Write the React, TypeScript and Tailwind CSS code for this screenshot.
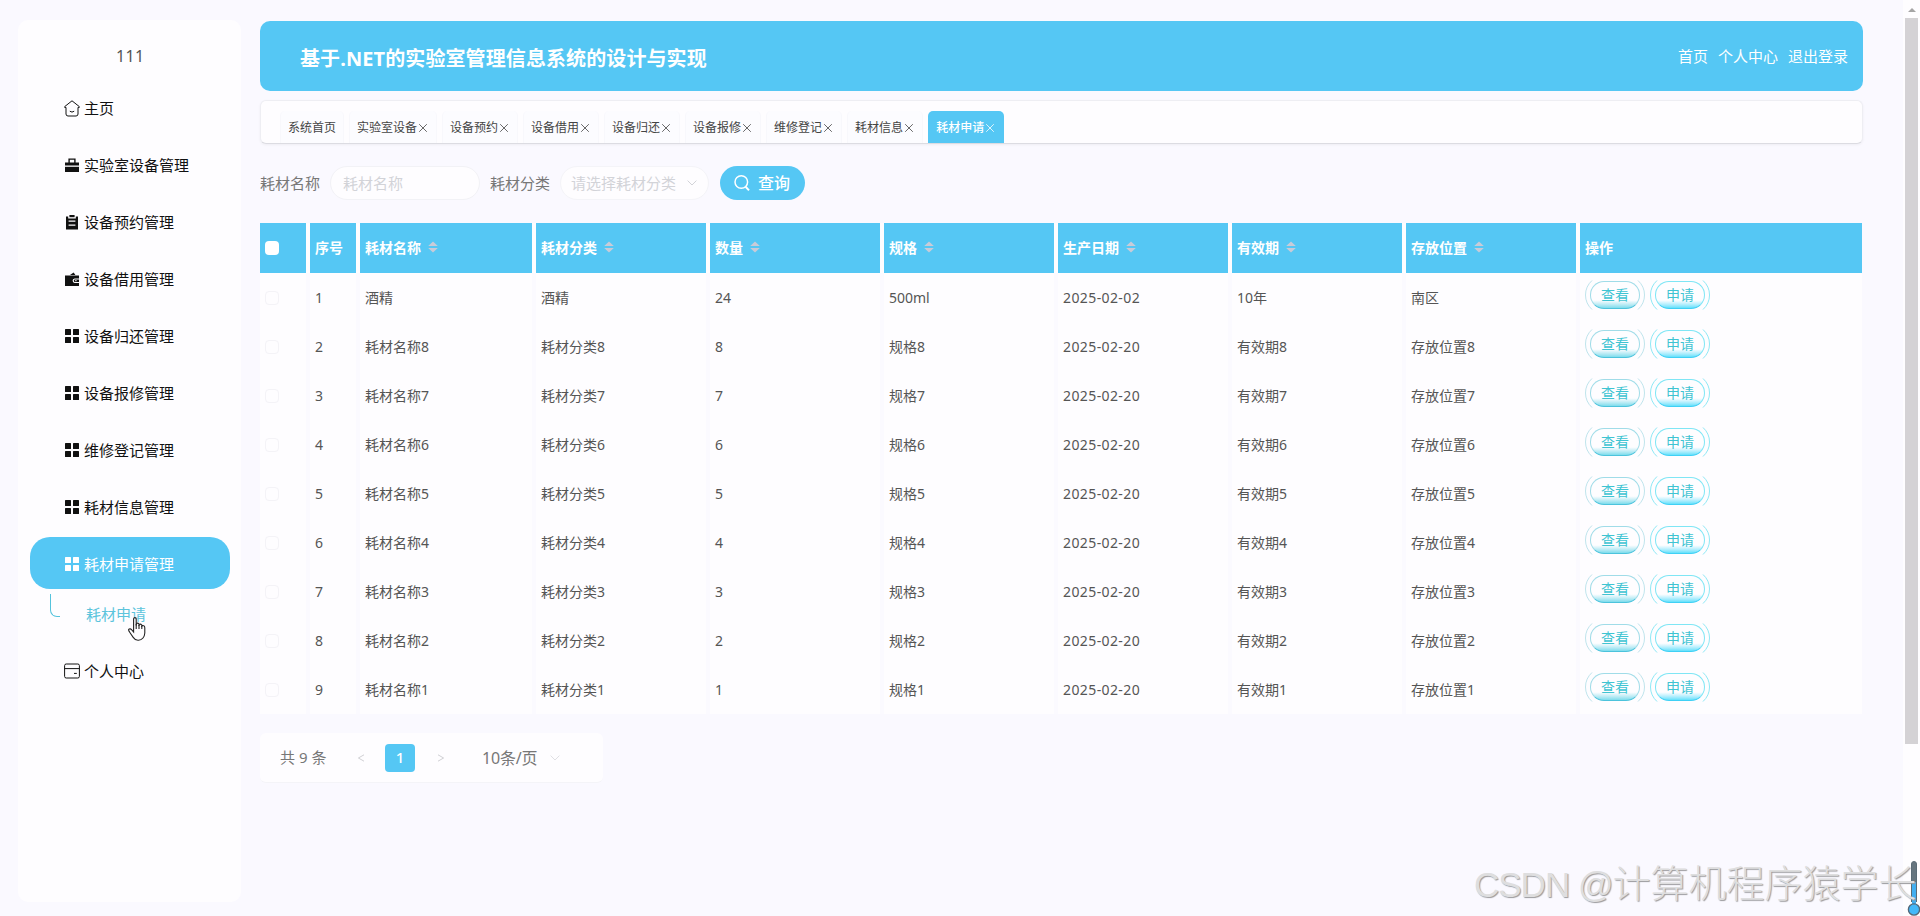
import React, { useState } from 'react';

interface MenuItem {
  label: string;
  icon: React.FC;
}

interface Tab {
  label: string;
  closable: boolean;
}

interface Supply {
  name: string;
  category: string;
  count: string;
  spec: string;
  date: string;
  expiry: string;
  place: string;
}

const HomeIcon: React.FC = () => (
  <svg viewBox="0 0 16 17" className="w-4 h-[17px]" fill="none" stroke="currentColor" strokeWidth="1">
    <path d="M8 .8 L.7 6.6 V7.4 H2 V14 Q2 16 4 16 H12 Q14 16 14 14 V7.4 H15.3 V6.6 Z" />
    <path d="M5.8 11.2 Q8 13 10.2 11.2" />
  </svg>
);

const BriefcaseIcon: React.FC = () => (
  <svg viewBox="0 0 16 16" className="w-4 h-4" fill="currentColor">
    <path d="M1 5.4 H4.4 V1.4 H11.6 V5.4 H15 V8.6 H1 Z M5.8 2.8 V5.4 H10.2 V2.8 Z" fillRule="evenodd" />
    <path d="M1 9.8 H15 V15 H1 Z" />
  </svg>
);

const ClipboardIcon: React.FC = () => (
  <svg viewBox="0 0 16 16" className="w-4 h-4" fill="currentColor">
    <path d="M2 2.6 H4.2 V4.4 H11.8 V2.6 H14 V15.6 H2 Z M4.6 6.6 V7.8 H11.4 V6.6 Z M4.6 10.6 V11.8 H11.4 V10.6 Z" fillRule="evenodd" />
    <path d="M5.4 1 H10.6 V3.2 H5.4 Z" />
  </svg>
);

const WalletIcon: React.FC = () => (
  <svg viewBox="0 0 16 16" className="w-4 h-4" fill="currentColor">
    <path d="M6 4 L9.6 1.6 L11.4 4 Z" />
    <path d="M1 4.6 H15 V7.4 H10.6 Q8.6 7.6 8.6 9.6 Q8.6 11.8 10.6 12 H15 V15 H1 Z" />
    <path d="M11 8.4 H15 V11 H11 Q9.8 11 9.8 9.7 Q9.8 8.4 11 8.4 Z M11.3 9.1 V10.3 H12.5 V9.1 Z" fillRule="evenodd" />
  </svg>
);

const GridIcon: React.FC = () => (
  <svg viewBox="0 0 16 16" className="w-4 h-4" fill="currentColor">
    <rect x="1" y="1" width="6" height="6" rx=".5" />
    <rect x="9" y="1" width="6" height="6" rx=".5" />
    <rect x="1" y="9" width="6" height="6" rx=".5" />
    <rect x="9" y="9" width="6" height="6" rx=".5" />
  </svg>
);

const CardIcon: React.FC = () => (
  <svg viewBox="0 0 16 16" className="w-4 h-4" fill="none" stroke="currentColor" strokeWidth="1">
    <rect x=".6" y="1" width="14.8" height="14" rx="1.6" />
    <path d="M.6 5.6 H15.4 M10 10.4 H12.8" />
  </svg>
);

const SearchIcon: React.FC = () => (
  <svg viewBox="0 0 16 18" className="w-4 h-[18px]" fill="none" stroke="currentColor" strokeWidth="1.5">
    <circle cx="7.3" cy="8" r="6.3" />
    <path d="M11.6 12.8 L15 16.4" strokeWidth="2" />
  </svg>
);

const ChevronDown: React.FC = () => (
  <svg viewBox="0 0 10 6" className="w-2.5 h-1.5" fill="none" stroke="currentColor" strokeWidth="1">
    <path d="M.6 .6 L5 5 L9.4 .6" />
  </svg>
);

const CloseIcon: React.FC = () => (
  <svg viewBox="0 0 12 12" className="w-3 h-3" fill="none" stroke="currentColor" strokeWidth="1" opacity=".8">
    <path d="M2.2 2.2 L9.8 9.8 M9.8 2.2 L2.2 9.8" />
  </svg>
);

const SortIcon: React.FC = () => (
  <svg viewBox="0 0 10 12" className="w-2.5 h-3 ml-[7px] -mt-0.5" fill="#c9cbd8">
    <path d="M5 .4 L9.8 5 H.2 Z M.2 7 H9.8 L5 11.6 Z" />
  </svg>
);

const menu: MenuItem[] = [
  { label: '主页', icon: HomeIcon },
  { label: '实验室设备管理', icon: BriefcaseIcon },
  { label: '设备预约管理', icon: ClipboardIcon },
  { label: '设备借用管理', icon: WalletIcon },
  { label: '设备归还管理', icon: GridIcon },
  { label: '设备报修管理', icon: GridIcon },
  { label: '维修登记管理', icon: GridIcon },
  { label: '耗材信息管理', icon: GridIcon },
  { label: '耗材申请管理', icon: GridIcon },
];

const tabs: Tab[] = [
  { label: '系统首页', closable: false },
  { label: '实验室设备', closable: true },
  { label: '设备预约', closable: true },
  { label: '设备借用', closable: true },
  { label: '设备归还', closable: true },
  { label: '设备报修', closable: true },
  { label: '维修登记', closable: true },
  { label: '耗材信息', closable: true },
  { label: '耗材申请', closable: true },
];

const headers = ['耗材名称', '耗材分类', '数量', '规格', '生产日期', '有效期', '存放位置'];

const supplies: Supply[] = [
  { name: '酒精', category: '酒精', count: '24', spec: '500ml', date: '2025-02-02', expiry: '10年', place: '南区' },
  ...[8, 7, 6, 5, 4, 3, 2, 1].map(n => ({
    name: `耗材名称${n}`,
    category: `耗材分类${n}`,
    count: `${n}`,
    spec: `规格${n}`,
    date: '2025-02-20',
    expiry: `有效期${n}`,
    place: `存放位置${n}`,
  })),
];

const COLUMNS = 'grid grid-cols-[46px_46px_172px_170px_170px_170px_170px_170px_170px_282px] gap-x-1';

const Sidebar: React.FC = () => {
  const [active, setActive] = useState('耗材申请管理');

  return (
    <aside className="w-[223px] h-[882px] mt-5 ml-[18px] shrink-0 rounded-[10px] bg-[#fefdff] text-[15px] text-[#111]">
      <div className="h-[61px] pt-6 pl-[98px] text-base leading-6 text-[#555] tracking-[0.3px]">111</div>
      <nav className="pl-3">
        {menu.map(({ label, icon: Icon }) => (
          <button
            key={label}
            onClick={() => setActive(label)}
            className={`flex items-center gap-1 w-[200px] h-[52px] mb-[5px] pt-0.5 pl-[34px] rounded-[20px] ${
              active === label ? 'bg-[#55c7f4] text-white' : ''
            }`}
          >
            <Icon />
            {label}
          </button>
        ))}
        <div className="flex h-[51px] pl-5 text-[#5cc4dc]">
          <div className="w-2.5 h-[23px] border-l border-b rounded-bl-[7px] border-[#55c3dc]" />
          <span className="relative ml-[26px] mt-[8px] leading-6 h-6">
            耗材申请
            <svg viewBox="0 0 20 26" className="absolute left-[41px] top-[14px] w-5 h-[26px]" fill="#fefdff" stroke="#222" strokeWidth="1.1">
              <path d="M6.6 16 V3.2 Q6.6 1.6 7.9 1.6 Q9.2 1.6 9.2 3.2 V9.6 V7.6 Q10.8 6.6 12 8 V10 V8.4 Q13.6 7.6 14.8 9 V11 V9.6 Q17.8 9 17.8 12 V17 Q17.6 20 16 22 Q14 24.4 11 24.2 Q8 24.2 6.2 21.4 L3.2 17 Q1.2 14.4 1.6 13.4 Q3.2 12 5 14.2 Z" />
              <path d="M9.2 8 V13 M12 9 V13 M14.8 10 V13" />
            </svg>
          </span>
        </div>
        <button className="flex items-center gap-1 w-[200px] h-[52px] pl-[34px]">
          <CardIcon />
          个人中心
        </button>
      </nav>
    </aside>
  );
};

const TabBar: React.FC = () => (
  <div className="flex items-end gap-[5px] h-11 mt-[9px] pl-[19px] w-[1603px] rounded-md border border-[#eeeef3] border-b-[#dcdce2] bg-[#fefdff] text-xs text-[#444] shadow-[0_1px_3px_rgba(0,0,0,0.05)]">
    {tabs.map(({ label, closable }, i) => (
      <div
        key={label}
        className={`flex items-center h-8 pt-0.5 rounded-t-[5px] ${
          i === tabs.length - 1 ? 'px-2 bg-[#55c7f4] text-white font-medium' : 'px-[7px] bg-[#fcfcff] border-x border-[#f8f8fc]'
        }`}
      >
        {label}
        {closable && <CloseIcon />}
      </div>
    ))}
  </div>
);

const SearchForm: React.FC = () => (
  <div className="flex items-center h-[34px] mt-[22px] text-[15px] text-[#777]">
    <label>耗材名称</label>
    <input
      placeholder="耗材名称"
      className="w-[150px] h-[34px] ml-2.5 px-3 rounded-full border border-[#f2f2f6] bg-[#fefdff] placeholder:text-[#d2d3d8] outline-none"
    />
    <label className="ml-2.5">耗材分类</label>
    <div className="flex items-center justify-between w-[149px] h-[34px] ml-2.5 pl-2.5 pr-[11px] rounded-full border border-[#f4f4f8] bg-[#fefdff] text-[#d2d3d8]">
      请选择耗材分类
      <ChevronDown />
    </div>
    <button className="flex items-center gap-2 w-[85px] h-[34px] ml-[11px] pl-3.5 rounded-full bg-[#55c7f4] text-white text-base font-medium">
      <SearchIcon />
      查询
    </button>
  </div>
);

// Pill with a pair of thin arcs on its left and right side
const ActionButton: React.FC<{ label: string; bright?: boolean }> = ({ label, bright }) => (
  <button className="relative flex items-center justify-center w-[60px] h-[34px] text-sm text-[#3fc4d2]">
    <svg
      viewBox="0 0 60 34"
      className={`absolute inset-0 w-[60px] h-[34px] ${bright ? 'text-[#8ee8f5]' : 'text-[#bfe4ec]'}`}
      fill="none"
      stroke="currentColor"
      strokeWidth="1"
    >
      <path d="M7 2.5 Q.5 8.5 .5 17 Q.5 25.5 7 31.5 M53 2.5 Q59.5 8.5 59.5 17 Q59.5 25.5 53 31.5" />
    </svg>
    <span
      className={`flex items-center justify-center w-[50px] h-7 rounded-[14px] border bg-linear-to-t to-30% ${
        bright
          ? 'border-[#7fe6f5] border-b-[#3fd0f5] from-[#5fe0fb] to-[#fefdff]'
          : 'border-[#a0dce8] border-b-[#4cc3dc] from-[#7cdcec] to-[#fefdff]'
      }`}
    >
      {label}
    </span>
  </button>
);

const SupplyTable: React.FC = () => (
  <div className="w-[1602px] mt-[23px] text-sm text-[#555] bg-[#fefdff]">
    <div className={`${COLUMNS} h-[50px] text-white font-bold`}>
      <div className="flex items-center pl-[5px] bg-[#55c7f4]">
        <span className="w-3.5 h-3.5 rounded-sm bg-white" />
      </div>
      <div className="flex items-center pl-[5px] bg-[#55c7f4]">序号</div>
      {headers.map(header => (
        <div key={header} className="flex items-center pl-[5px] bg-[#55c7f4]">
          {header}
          <SortIcon />
        </div>
      ))}
      <div className="flex items-center pl-[5px] bg-[#55c7f4]">操作</div>
    </div>
    <div className="bg-[#fbfaff]">
      {supplies.map((row, i) => (
        <div key={row.name} className={`${COLUMNS} h-[49px] *:flex *:items-center *:pl-[5px] *:bg-[#fefdff]`}>
          <div>
            <span className="w-3.5 h-3.5 rounded-sm border border-[#f4f3f7]" />
          </div>
          <div>{i + 1}</div>
          <div>{row.name}</div>
          <div>{row.category}</div>
          <div>{row.count}</div>
          <div>{row.spec}</div>
          <div className="tracking-[0.4px]">{row.date}</div>
          <div>{row.expiry}</div>
          <div>{row.place}</div>
          <div className="gap-[5px] pb-[5px]">
            <ActionButton label="查看" />
            <ActionButton label="申请" bright />
          </div>
        </div>
      ))}
    </div>
  </div>
);

const Pagination: React.FC = () => (
  <div className="flex items-center w-[343px] h-[50px] mt-[19px] pl-5 rounded-md bg-[#fefdff] border-b border-[#f4f4f8] text-[15px] text-[#777]">
    <span className="w-[77px]">共 9 条</span>
    <svg viewBox="0 0 8 8" className="w-2 h-2" fill="none" stroke="#d0d0d4">
      <path d="M7 .8 L1.4 4 L7 7.2" />
    </svg>
    <span className="flex items-center justify-center w-[30px] h-7 ml-5 rounded bg-[#55c7f4] text-white font-medium">1</span>
    <svg viewBox="0 0 8 8" className="w-2 h-2 ml-[22px]" fill="none" stroke="#d0d0d4">
      <path d="M1 .8 L6.6 4 L1 7.2" />
    </svg>
    <span className="w-[68px] ml-[37px] text-base tracking-[-0.2px]">10条/页</span>
    <span className="text-[#e0e0e4]">
      <ChevronDown />
    </span>
  </div>
);

const Scrollbar: React.FC = () => (
  <div className="flex flex-col items-center w-[17px] h-full bg-[#fefdff]">
    <svg viewBox="0 0 8 4" className="w-2 h-1 mt-2" fill="#a5a5a5">
      <path d="M4 0 L8 4 H0 Z" />
    </svg>
    <div className="w-[13px] h-[726px] mt-1.5 bg-[#d4d2d5]" />
  </div>
);

const App: React.FC = () => (
  <div className="relative flex w-[1920px] h-[916px] overflow-hidden bg-[#faf9ff] font-['Noto_Sans','Noto_Sans_CJK_SC',sans-serif]">
    <Sidebar />
    <main className="flex-1 pl-[19px] pt-[21px]">
      <header className="flex items-center justify-between w-[1603px] h-[70px] pl-10 pr-[15px] rounded-[10px] bg-[#55c7f4] text-white">
        <h1 className="pt-1.5 text-xl font-bold tracking-[0.1px]">基于.NET的实验室管理信息系统的设计与实现</h1>
        <div className="flex gap-2.5 text-[15px]">
          <span>首页</span>
          <span>个人中心</span>
          <span>退出登录</span>
        </div>
      </header>
      <TabBar />
      <SearchForm />
      <SupplyTable />
      <Pagination />
    </main>
    <Scrollbar />

    {/* thermometer slider and watermark float over the page corner */}
    <svg viewBox="0 0 14 56" className="absolute left-[1907px] top-[860px] w-3.5 h-14">
      <path d="M4.5 42 V4 Q4.5 1.5 7 1.5 Q9.5 1.5 9.5 4 V42" fill="#66757f" stroke="#5b6b76" />
      <path d="M5 22 H9 V44 H5 Z" fill="#42aef0" />
      <circle cx="7" cy="49.5" r="5.6" fill="#42b8fa" stroke="#536879" strokeWidth="1.4" />
    </svg>
    <div className="absolute left-[1474px] top-[860px] whitespace-nowrap text-[38px] leading-[48px] font-light text-[#dededf] [text-shadow:1px_1px_1px_#9a9a9d] font-['Liberation_Sans','Noto_Sans_CJK_SC',sans-serif]">
      <span className="text-[35px] tracking-[-1px]">CSDN @</span>计算机程序猿学长
    </div>
  </div>
);

export default App;
